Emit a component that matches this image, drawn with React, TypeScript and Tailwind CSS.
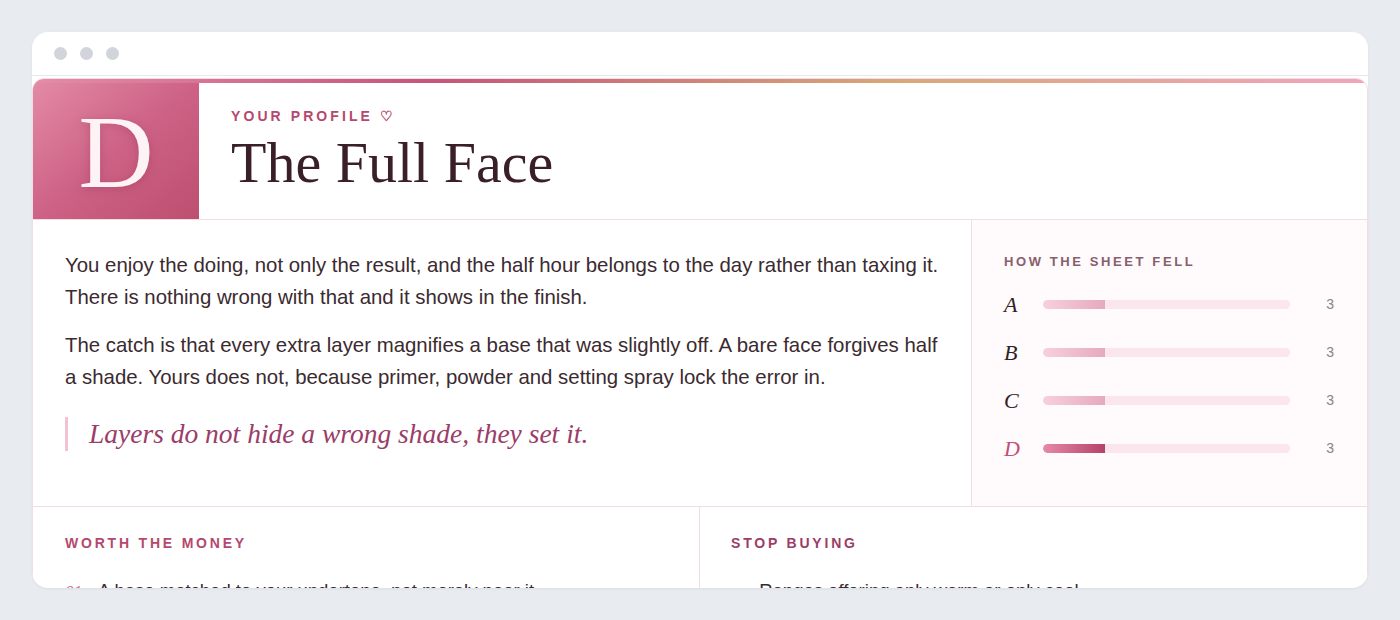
import React from 'react';

const serif = { fontFamily: '"Liberation Serif", "Times New Roman", serif' };

const tally = [
  { letter: 'A', count: 3, mine: false },
  { letter: 'B', count: 3, mine: false },
  { letter: 'C', count: 3, mine: false },
  { letter: 'D', count: 3, mine: true },
];

export default function App() {
  return (
    <div className="min-h-[620px] bg-[#e8ebf0] pt-8 px-8 font-['Liberation_Sans',Arial,sans-serif]">
      <div className="h-[556px] bg-white rounded-2xl overflow-hidden shadow-[0_1px_3px_rgba(15,23,42,0.06)]">
        {/* window chrome */}
        <div className="h-[44px] flex items-center gap-[13px] pl-[22px] border-b border-[#e6e8ec]">
          <span className="w-[13px] h-[13px] rounded-full bg-[#d1d5db]" />
          <span className="w-[13px] h-[13px] rounded-full bg-[#d1d5db]" />
          <span className="w-[13px] h-[13px] rounded-full bg-[#d1d5db]" />
        </div>

        <div className="mt-[2px] rounded-t-xl border border-[#f3dde5] overflow-hidden">
          <div className="h-[4px]" style={{ backgroundImage: 'linear-gradient(90deg,#e48ca7 0%,#c4567a 30%,#d9a878 65%,#f2a4bc 100%)' }} />

          {/* header */}
          <div className="flex h-[137px] border-b border-[#f3dde5]">
            <div className="w-[166px] flex items-center justify-center bg-[linear-gradient(140deg,#e38aa5_0%,#cd6286_50%,#bd4f70_100%)]">
              <span style={serif} className="text-[104px] leading-none mt-[2px] text-[#fdf3f6] drop-shadow-[0_2px_4px_rgba(120,20,50,0.25)]">D</span>
            </div>
            <div className="pl-[32px] pt-[23px]">
              <div className="text-[14px] font-bold tracking-[0.22em] text-[#b5486e]">YOUR PROFILE ♡</div>
              <h1 style={serif} className="text-[58px] leading-[1.1] mt-[4px] text-[#3b1f28]">The Full Face</h1>
            </div>
          </div>

          {/* body */}
          <div className="grid grid-cols-[1fr_396px] h-[287px] border-b border-[#f3dde5]">
            <div className="pl-[32px] pr-[28px] pt-[29px] text-[20.4px] leading-[32px] text-[#3b2a30]">
              <p>You enjoy the doing, not only the result, and the half hour belongs to the day rather than taxing it. There is nothing wrong with that and it shows in the finish.</p>
              <p className="mt-[16px]">The catch is that every extra layer magnifies a base that was slightly off. A bare face forgives half a shade. Yours does not, because primer, powder and setting spray lock the error in.</p>
              <blockquote style={serif} className="mt-[24px] border-l-[3px] border-[#f0c2d2] pl-[21px] italic text-[27.5px] leading-[34px] text-[#9b3d68]">
                Layers do not hide a wrong shade, they set it.
              </blockquote>
            </div>
            <div className="border-l border-[#f3dde5] bg-[#fffafb] pl-[32px] pr-[33px] pt-[32px]">
              <div className="text-[13px] font-bold tracking-[0.2em] text-[#86606d]">HOW THE SHEET FELL</div>
              <div className="mt-[9px] flex flex-col">
                {tally.map((t) => (
                  <div key={t.letter} className="h-[48px] flex items-center">
                    <span style={serif} className={`w-[39px] italic text-[22px] ${t.mine ? 'text-[#c0507a]' : 'text-[#2e2228]'}`}>{t.letter}</span>
                    <div className="w-[247px] h-[9px] rounded-full bg-[#fbe6ee] overflow-hidden">
                      <div
                        className={`h-full rounded-l-full ${t.mine ? 'bg-gradient-to-r from-[#e589a8] to-[#b5416a]' : 'bg-gradient-to-r from-[#f6d0de] to-[#e7a9bf]'}`}
                        style={{ width: `${(t.count / 12) * 100}%` }}
                      />
                    </div>
                    <span className="ml-auto text-[14px] text-[#8a8088]">{t.count}</span>
                  </div>
                ))}
              </div>
            </div>
          </div>

          {/* lists */}
          <div className="grid grid-cols-2">
            <div className="pl-[32px] pt-[26px] border-r border-[#f3dde5]">
              <div className="text-[14px] font-bold tracking-[0.2em] text-[#b5486e]">WORTH THE MONEY</div>
              <div className="mt-[23px] flex items-baseline gap-[16px] text-[18.5px] text-[#3b2a30]">
                <span style={serif} className="italic text-[17px] text-[#d66a92]">01</span>
                <span>A base matched to your undertone, not merely near it.</span>
              </div>
            </div>
            <div className="pl-[31px] pt-[26px]">
              <div className="text-[14px] font-bold tracking-[0.2em] text-[#9b3d68]">STOP BUYING</div>
              <div className="mt-[23px] flex items-baseline gap-[20px] text-[18.5px] text-[#3b2a30]">
                <span className="text-[14px] text-[#d66a92]">×</span>
                <span>Ranges offering only warm or only cool.</span>
              </div>
            </div>
          </div>
        </div>
      </div>
    </div>
  );
}
